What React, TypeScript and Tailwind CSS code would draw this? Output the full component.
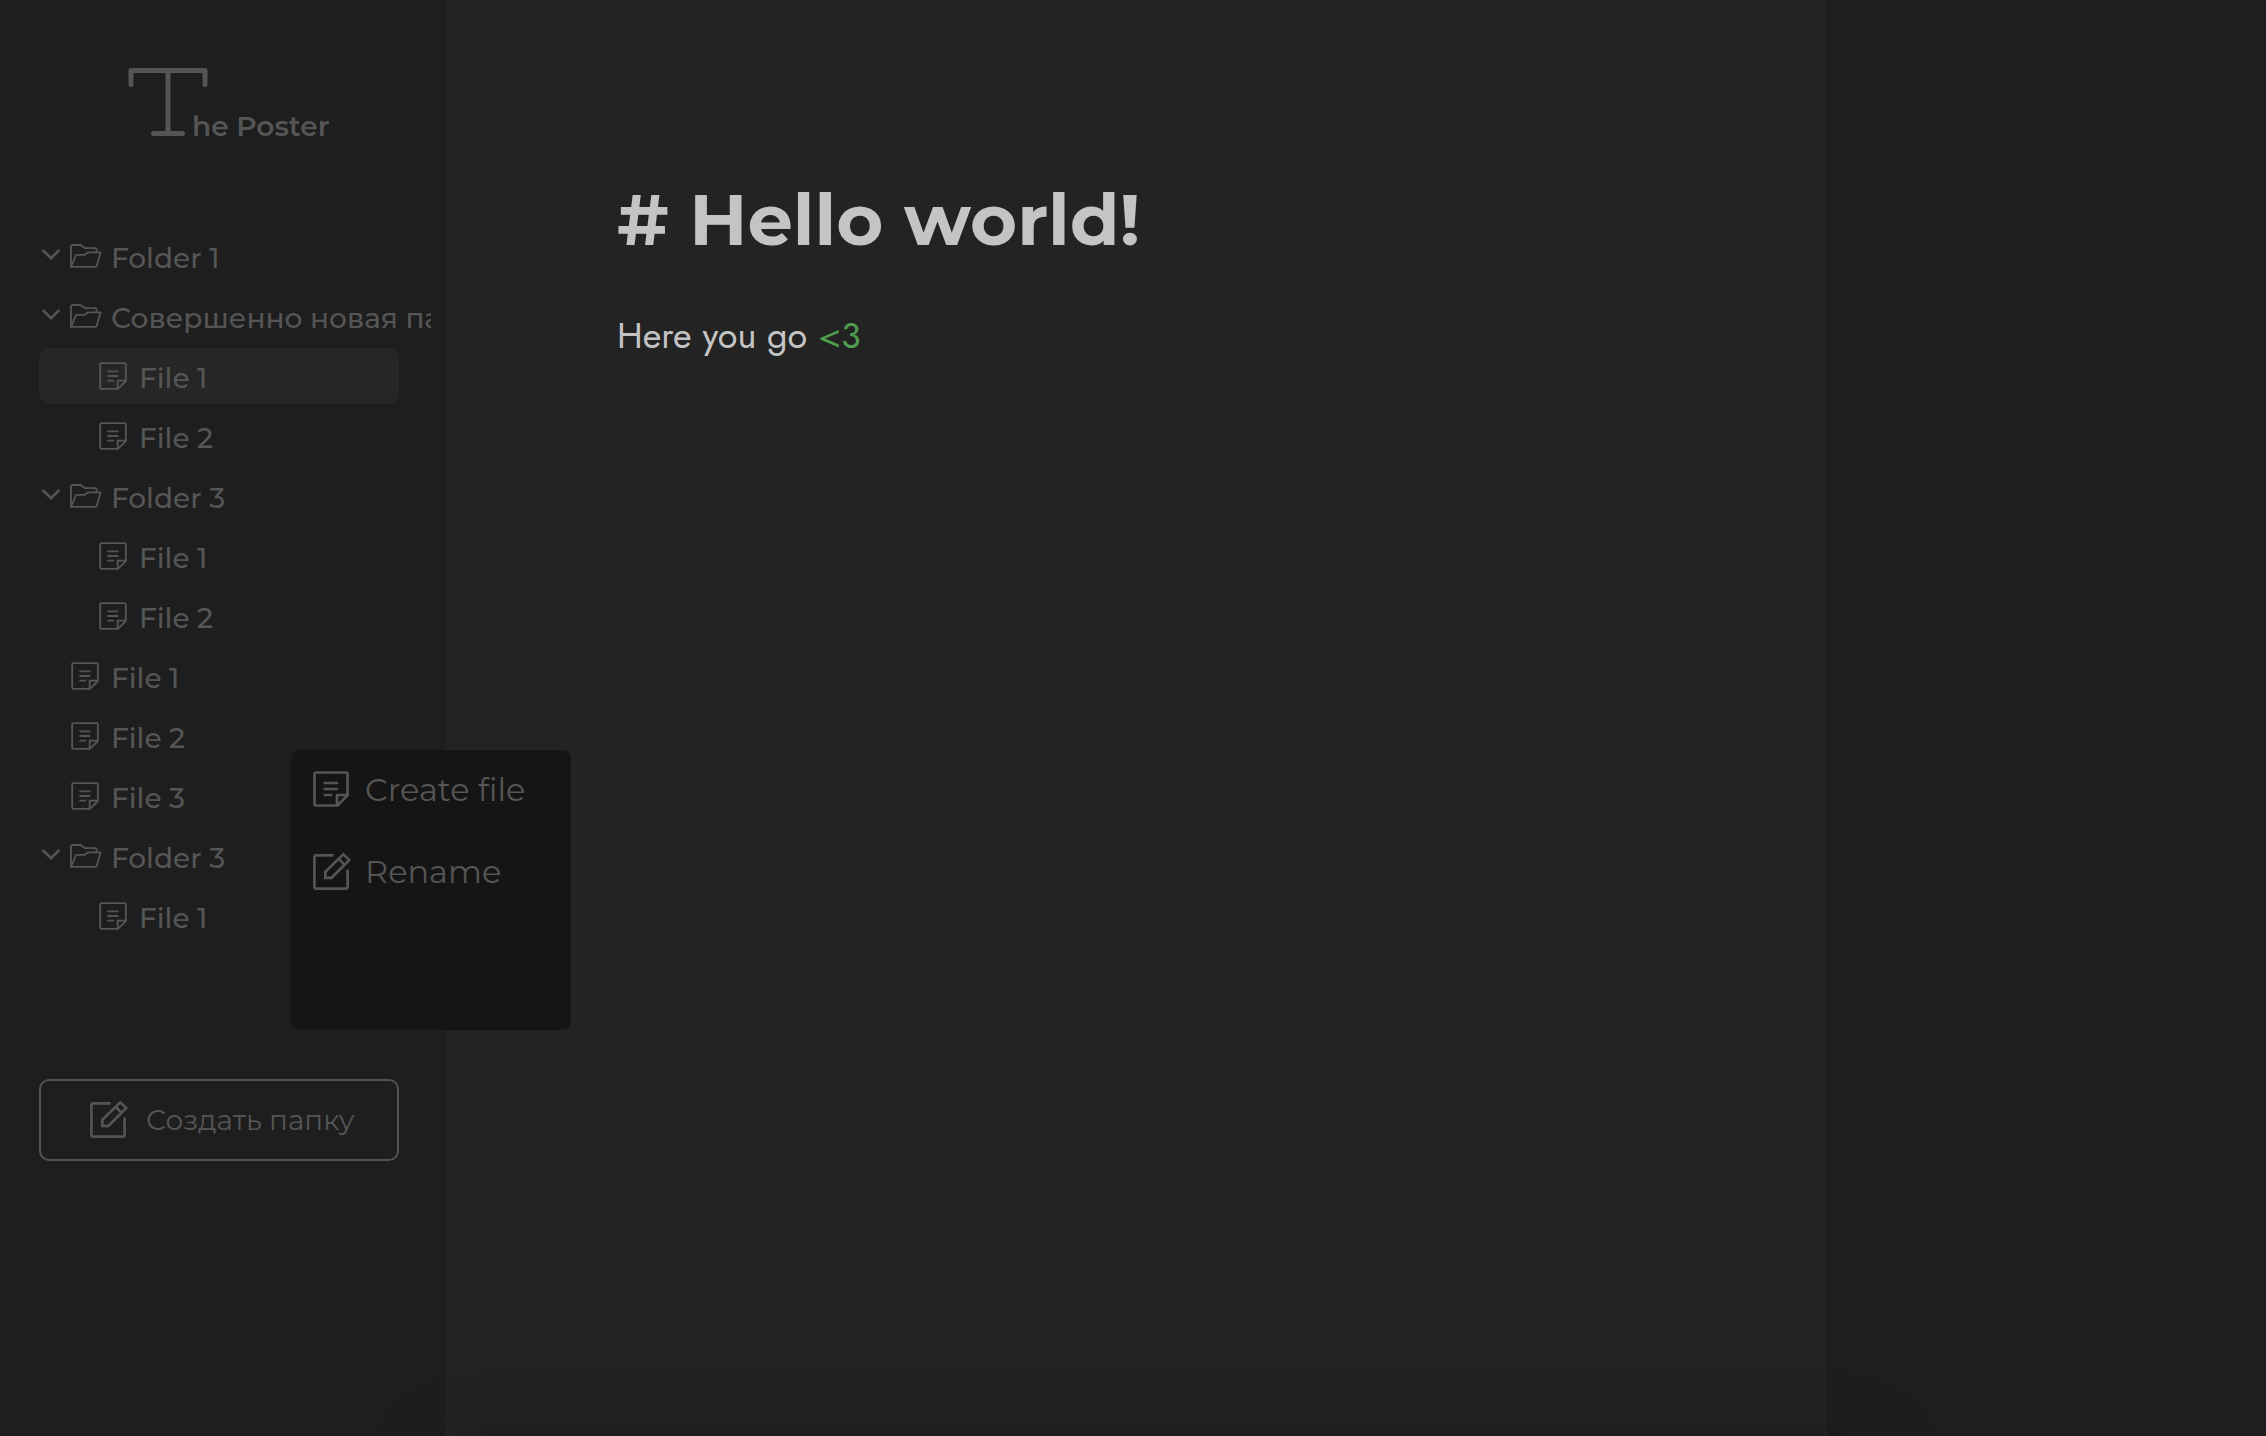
import React from "react";

type IconProps = { className: string; strokeWidth?: number };

function NoteIcon({ className, strokeWidth = 2.7 }: IconProps) {
  return (
    <svg className={className} viewBox="0 0 36 36" fill="none" stroke="currentColor" strokeWidth={strokeWidth} strokeLinecap="round" strokeLinejoin="round" aria-hidden="true">
      <path d="M24.4 34.5H3A1.5 1.5 0 0 1 1.5 33V3A1.5 1.5 0 0 1 3 1.5H33A1.5 1.5 0 0 1 34.5 3V24.4Z" />
      <path d="M24 34V24H34" />
      <path d="M11.7 12H24M11.7 18H24M11.7 24H18.3" />
    </svg>
  );
}

function EditIcon({ className }: IconProps) {
  return (
    <svg className={className} viewBox="0 -2 38 38" fill="none" stroke="currentColor" strokeWidth={2.7} strokeLinecap="round" strokeLinejoin="round" aria-hidden="true">
      <path d="M19.5 1.4H3A1.6 1.6 0 0 0 1.4 3V33A1.6 1.6 0 0 0 3 34.6H33A1.6 1.6 0 0 0 34.6 33V16.5" />
      <path d="M12.3 23.8V17.8L30.3 .4L36.2 6.1L18.5 23.8Z" strokeLinejoin="miter" />
      <path d="M25.7 4.9L31.4 10.6" strokeLinecap="butt" />
    </svg>
  );
}

function FolderIcon({ className }: IconProps) {
  return (
    <svg className={className} viewBox="0 0 32 24" fill="none" stroke="currentColor" strokeWidth={1.8} strokeLinecap="round" strokeLinejoin="round" aria-hidden="true">
      <path d="M1 22.8V2.6A1.6 1.6 0 0 1 2.6 1H10.6L15.2 4.2H25A1.6 1.6 0 0 1 26.6 5.8V8.2" />
      <path d="M1.2 22.8L5.4 12.2Q5.9 10.9 7.2 10.9H14.3L18 8.3H30.6L26.8 21.6Q26.5 22.8 25.3 22.8Z" />
    </svg>
  );
}

function Chevron({ className }: IconProps) {
  return (
    <svg className={className} viewBox="0 0 18 11" fill="none" stroke="currentColor" strokeWidth={2.7} strokeLinecap="round" strokeLinejoin="round" aria-hidden="true">
      <path d="M1.4 1.6L9 9.2L16.6 1.6" />
    </svg>
  );
}

type Row = { kind: "folder" | "file"; label: string; nested?: boolean; selected?: boolean };

const rows: Row[] = [
  { kind: "folder", label: "Folder 1" },
  { kind: "folder", label: "Совершенно новая папка" },
  { kind: "file", label: "File 1", nested: true, selected: true },
  { kind: "file", label: "File 2", nested: true },
  { kind: "folder", label: "Folder 3" },
  { kind: "file", label: "File 1", nested: true },
  { kind: "file", label: "File 2", nested: true },
  { kind: "file", label: "File 1" },
  { kind: "file", label: "File 2" },
  { kind: "file", label: "File 3" },
  { kind: "folder", label: "Folder 3" },
  { kind: "file", label: "File 1", nested: true },
];

function TreeRow({ row }: { row: Row }) {
  const indent = row.kind === "folder" ? "pl-[3px]" : row.nested ? "pl-[60px]" : "pl-8";
  return (
    <li className="pr-8">
      <button type="button" className={`flex h-14 w-full items-center rounded-[10px] text-[28px] leading-8 font-medium whitespace-nowrap ${indent} ${row.selected ? "bg-[#262626]" : ""}`}>
        {row.kind === "folder" ? (
          <>
            <Chevron className="mr-2.5 mb-1 h-[11px] w-[18px] shrink-0" />
            <FolderIcon className="mr-[9px] h-6 w-8 shrink-0" />
          </>
        ) : (
          <NoteIcon className="mr-3 h-7 w-7 shrink-0" strokeWidth={2.4} />
        )}
        <span className="pt-1">{row.label}</span>
      </button>
    </li>
  );
}

export default function App() {
  return (
    <div className="relative flex min-h-screen overflow-hidden bg-[#1e1e1e] font-['Montserrat','Inter',sans-serif] text-[#555555]">
      <aside className="w-[445px] shrink-0 pt-[67px] pr-3.5 pl-[39px]">
        <a href="#" className="ml-[89px] flex items-end">
          <svg className="h-[69px] w-20" viewBox="0 0 80 69" fill="none" stroke="currentColor" strokeWidth={5} strokeLinecap="round" strokeLinejoin="round" aria-label="T">
            <path d="M3 17.5V3.5H77V17.5M40 3.5V66.5M25.5 66.5H54.500" />
          </svg>
          <span className="-ml-4 text-[28px] leading-5 font-semibold">he Poster</span>
        </a>
        <nav className="mt-[92px] overflow-hidden">
          <ul className="flex flex-col gap-1">
            {rows.map((row, i) => (
              <TreeRow key={i} row={row} />
            ))}
          </ul>
        </nav>
        <div className="mt-[135px] pr-8">
          <button type="button" className="flex h-[82px] w-full items-center rounded-[10px] border-2 border-[#535353] pl-[49px] text-[28px] whitespace-nowrap">
            <EditIcon className="mr-[18px] mb-0.5 h-[38px] w-[38px] shrink-0" />
            Создать папку
          </button>
        </div>
      </aside>

      <main className="min-w-0 flex-1 bg-[#232323] px-[172px] pt-[175px] text-[#c4c4c4]">
        <h1 className="text-[72px] leading-[88px] font-bold">
          # Hello world!
        </h1>
        <p className="mt-12 font-['Jost','Lato',sans-serif] text-[36px] leading-12">
          Here you go <span className="text-[#4f9e4f]">&lt;3</span>
        </p>
      </main>

      <aside className="w-[439px] shrink-0" />

      <div className="absolute top-[750px] left-[291px] h-[280px] w-[280px] rounded-lg bg-[#151515] pt-[3px] text-[32px]" role="menu">
        <button type="button" role="menuitem" className="flex h-[72px] w-full items-center pl-[22px]">
          <NoteIcon className="mr-4 h-9 w-9" />
          <span className="pt-0.5">Create file</span>
        </button>
        <button type="button" role="menuitem" className="mt-2.5 flex h-[72px] w-full items-center pl-[22px]">
          <EditIcon className="mr-3.5 h-[38px] w-[38px]" />
          <span className="pt-0.5">Rename</span>
        </button>
      </div>

      <div className="pointer-events-none absolute right-[400px] -bottom-24 left-[445px] h-20 shadow-[0_0_80px_rgba(0,0,0,0.3)]" />
    </div>
  );
}
